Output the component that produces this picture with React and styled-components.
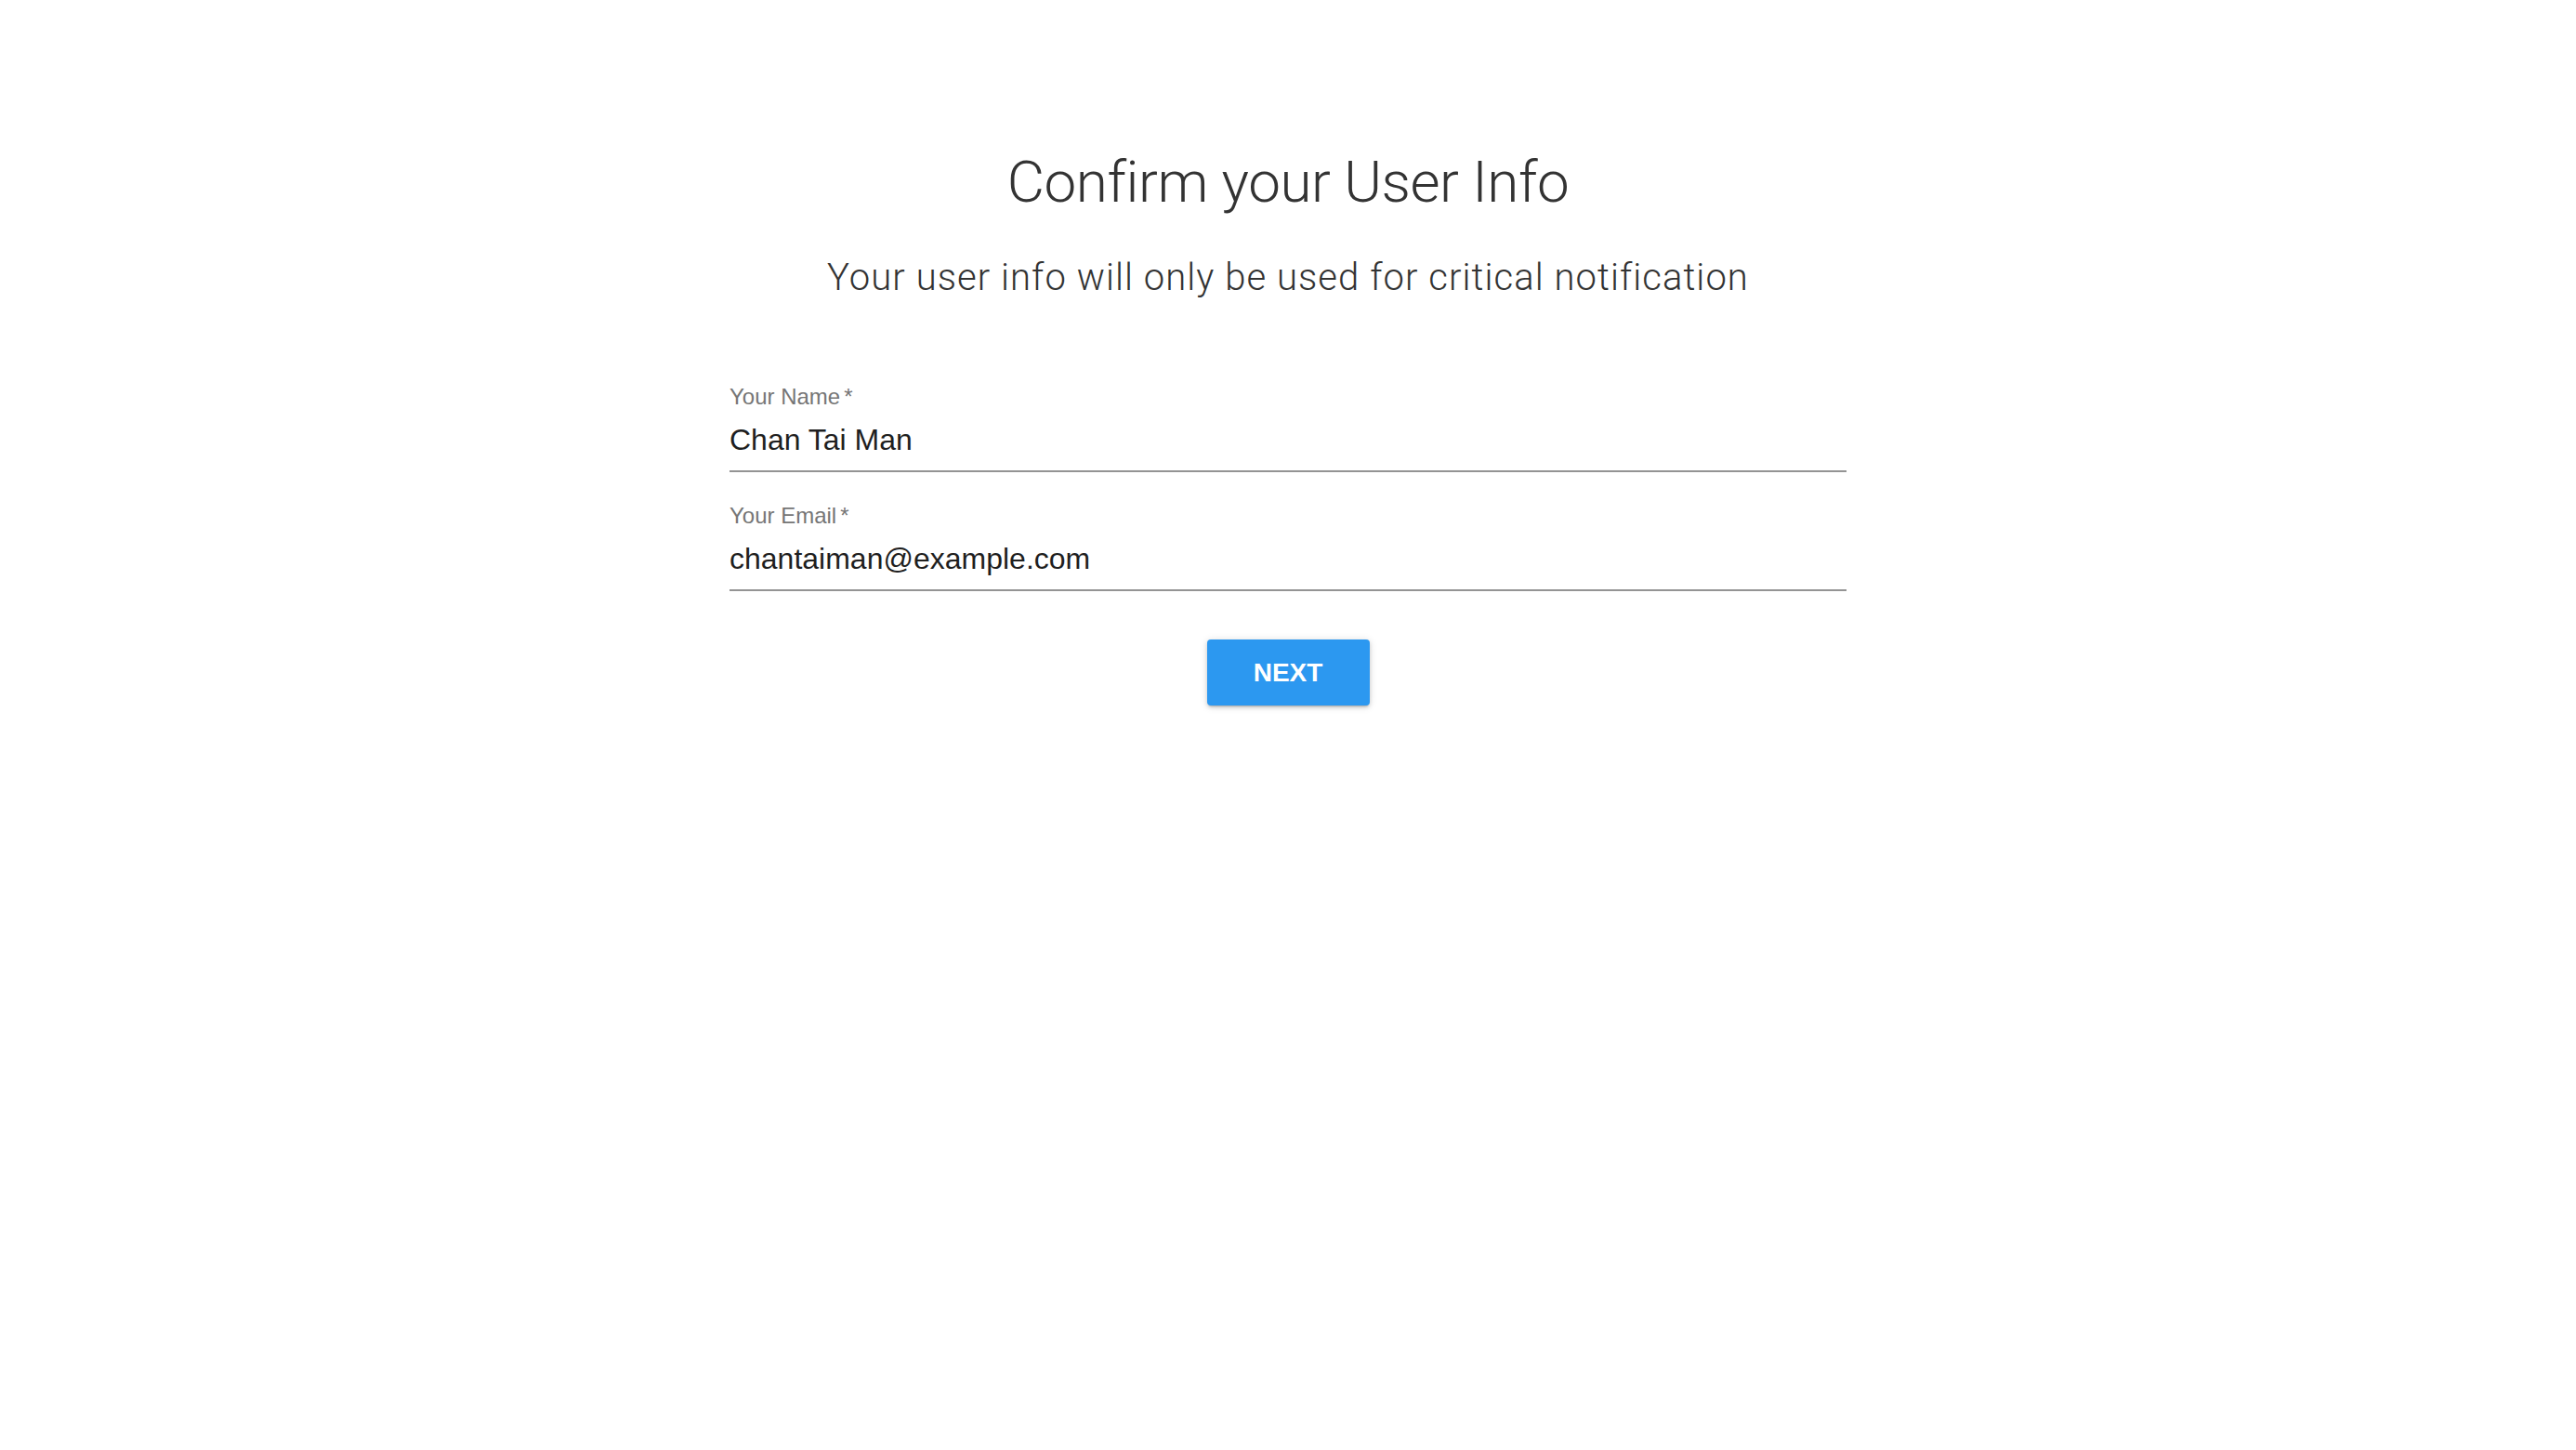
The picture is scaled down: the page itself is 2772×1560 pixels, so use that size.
import styled, { createGlobalStyle } from "styled-components";

const GlobalStyle = createGlobalStyle`
  html, body {
    margin: 0;
    padding: 0;
    background: #ffffff;
  }
  body {
    font-family: "Liberation Sans", Arial, sans-serif;
  }
`;

const Page = styled.main`
  display: flex;
  flex-direction: column;
  align-items: center;
  padding-top: 159px;
  min-height: 100vh;
  box-sizing: border-box;
`;

const Title = styled.h1`
  margin: 0;
  font-family: Roboto, "Liberation Sans", sans-serif;
  font-weight: 300;
  font-size: 62px;
  line-height: 74px;
  letter-spacing: -0.45px;
  color: #333333;
`;

const Subtitle = styled.p`
  margin: 42px 0 0;
  font-family: Roboto, "Liberation Sans", sans-serif;
  font-weight: 300;
  font-size: 40px;
  line-height: 48px;
  letter-spacing: 1.05px;
  color: #333333;
`;

const Form = styled.form`
  width: 1202px;
  margin-top: 90px;
  display: flex;
  flex-direction: column;
`;

const Field = styled.label`
  display: flex;
  flex-direction: column;
  border-bottom: 2px solid #949494;
  padding-bottom: 14px;

  & + & {
    margin-top: 33px;
  }
`;

const Label = styled.span`
  font-size: 24px;
  line-height: 28px;
  color: #767676;
  margin-bottom: 13px;

  i {
    font-style: normal;
    margin-left: 4px;
  }
`;

const Input = styled.input`
  border: none;
  outline: none;
  padding: 0;
  margin: 0;
  background: transparent;
  font-family: "Liberation Sans", Arial, sans-serif;
  font-size: 32px;
  line-height: 38px;
  height: 38px;
  color: #1f1f1f;
`;

const Actions = styled.div`
  display: flex;
  justify-content: center;
  margin-top: 52px;
`;

const Button = styled.button`
  width: 175px;
  height: 71px;
  border: none;
  border-radius: 4px;
  background: #2c98f0;
  color: #ffffff;
  font-family: "Liberation Sans", Arial, sans-serif;
  font-weight: 700;
  font-size: 28px;
  text-transform: uppercase;
  box-shadow: 0 3px 2px -2px rgba(0, 0, 0, 0.2), 0 2px 4px 0 rgba(0, 0, 0, 0.14),
    0 1px 10px 0 rgba(0, 0, 0, 0.12);
  cursor: pointer;
`;

const fields = [
  { label: "Your Name", value: "Chan Tai Man", type: "text" },
  { label: "Your Email", value: "chantaiman@example.com", type: "email" },
];

export default function App() {
  return (
    <>
      <GlobalStyle />
      <Page>
        <Title>Confirm your User Info</Title>
        <Subtitle>Your user info will only be used for critical notification</Subtitle>
        <Form onSubmit={(e) => e.preventDefault()}>
          {fields.map((f) => (
            <Field key={f.label}>
              <Label>
                {f.label}
                <i>*</i>
              </Label>
              <Input type={f.type} defaultValue={f.value} required />
            </Field>
          ))}
          <Actions>
            <Button type="submit">Next</Button>
          </Actions>
        </Form>
      </Page>
    </>
  );
}
